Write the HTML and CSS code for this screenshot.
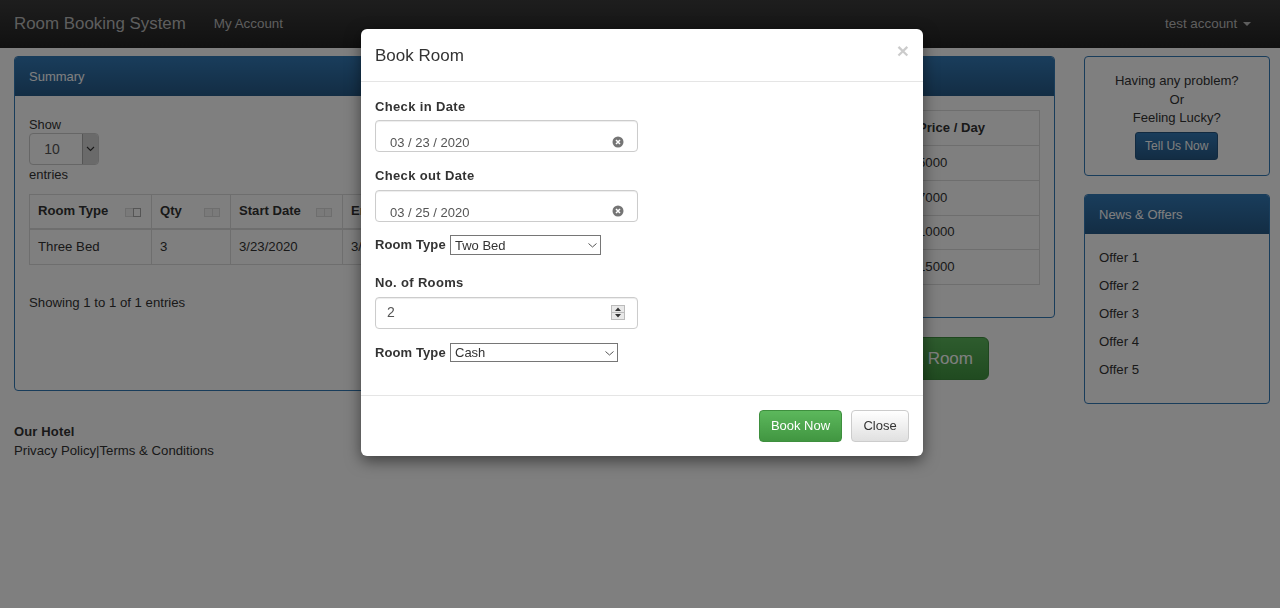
FILE: index.html
```html
<!DOCTYPE html>
<html lang="en">
<head>
<meta charset="utf-8">
<title>Room Booking System</title>
<link rel="stylesheet" href="styles.css">
</head>
<body>
<nav class="navbar">
  <a class="brand">Room Booking System</a>
  <a class="nav-link">My Account</a>
  <a class="nav-user">test account <span class="caret"></span></a>
</nav>
<div class="page">
  <main class="main">
    <div class="columns">
      <section class="panel summary">
        <div class="panel-head">Summary</div>
        <div class="panel-body">
          <div class="show-label">Show</div>
          <div class="fake-select"><span class="fs-value">10</span><span class="fs-arrow"><svg width="9" height="6" viewBox="0 0 9 6"><path d="M1 1l3.500 3.500L8 1" fill="none" stroke="#333" stroke-width="1.100"/></svg></span></div>
          <div class="entries-label">entries</div>
          <table class="grid-table">
            <thead>
              <tr>
                <th class="c1">Room Type<span class="sort"><i></i><i class="on"></i></span></th>
                <th class="c2">Qty<span class="sort"><i></i><i></i></span></th>
                <th class="c3">Start Date<span class="sort"><i></i><i></i></span></th>
                <th>End Date</th>
              </tr>
            </thead>
            <tbody>
              <tr><td>Three Bed</td><td>3</td><td>3/23/2020</td><td>3/25/2020</td></tr>
            </tbody>
          </table>
          <div class="showing">Showing 1 to 1 of 1 entries</div>
        </div>
      </section>
      <div class="rooms-col">
        <section class="panel rooms">
          <div class="panel-head">Rooms</div>
          <div class="panel-body rooms-body">
            <table class="price-table">
              <thead><tr><th>Room Type</th><th class="pc">Price / Day</th></tr></thead>
              <tbody>
                <tr><td>Single</td><td class="pc">5000</td></tr>
                <tr><td>Double</td><td class="pc">7000</td></tr>
                <tr><td>Three Bed</td><td class="pc">10000</td></tr>
                <tr><td>Suite</td><td class="pc">15000</td></tr>
              </tbody>
            </table>
          </div>
        </section>
        <div class="book-wrap"><a class="btn-lg">Book Room</a></div>
      </div>
    </div>
    <footer class="footer">
      <div class="foot-title">Our Hotel</div>
      <div>Privacy Policy|Terms &amp; Conditions</div>
    </footer>
  </main>
  <aside class="side">
    <section class="help-box">
      <div>Having any problem?</div>
      <div>Or</div>
      <div>Feeling Lucky?</div>
      <a class="btn-tell">Tell Us Now</a>
    </section>
    <section class="panel news">
      <div class="panel-head">News &amp; Offers</div>
      <ul class="offers">
        <li>Offer 1</li><li>Offer 2</li><li>Offer 3</li><li>Offer 4</li><li>Offer 5</li>
      </ul>
    </section>
  </aside>
</div>
<div class="backdrop"></div>
<div class="modal">
  <div class="modal-head">
    <h4 class="modal-title">Book Room</h4>
    <span class="close-x">×</span>
  </div>
  <div class="modal-body">
    <div class="lbl">Check in Date</div>
    <div class="control date"><span class="date-val">03 / 23 / 2020</span>
      <svg class="clear" width="12" height="12" viewBox="0 0 12 12"><circle cx="6" cy="6" r="5.500" fill="#757575"/><path d="M4 4l4 4M8 4l-4 4" stroke="#fff" stroke-width="1.500"/></svg>
    </div>
    <div class="lbl second">Check out Date</div>
    <div class="control date lower"><span class="date-val">03 / 25 / 2020</span>
      <svg class="clear" width="12" height="12" viewBox="0 0 12 12"><circle cx="6" cy="6" r="5.500" fill="#757575"/><path d="M4 4l4 4M8 4l-4 4" stroke="#fff" stroke-width="1.500"/></svg>
    </div>
    <div class="inline-row first-inline"><span class="lbl-inline">Room Type</span>
      <span class="sel-wrap"><select class="sel sel-a"><option>Two Bed</option></select><svg class="chev" width="9" height="5" viewBox="0 0 9 5"><path d="M.5.500l4 3.500 4-3.500" fill="none" stroke="#555"/></svg></span>
    </div>
    <div class="lbl third">No. of Rooms</div>
    <div class="control number"><span>2</span>
      <svg class="spin" width="14" height="15" viewBox="0 0 14 15"><rect x=".5" y=".5" width="13" height="14" fill="#e8e8e8" stroke="#bbb"/><path d="M.5 7.500h13" stroke="#bbb"/><path d="M7 2.500l3 3.500H4zM7 12.500L4 9h6z" fill="#333"/></svg>
    </div>
    <div class="inline-row second-inline"><span class="lbl-inline">Room Type</span>
      <span class="sel-wrap"><select class="sel sel-b"><option>Cash</option></select><svg class="chev" width="9" height="5" viewBox="0 0 9 5"><path d="M.5.500l4 3.500 4-3.500" fill="none" stroke="#555"/></svg></span>
    </div>
  </div>
  <div class="modal-foot">
    <a class="btn btn-green">Book Now</a>
    <a class="btn btn-light">Close</a>
  </div>
</div>
</body>
</html>
```
FILE: styles.css
```css
* { box-sizing: border-box; }
html, body { height: 100%; }
body {
  margin: 0;
  background: #fff;
  color: #333;
  font-family: "Liberation Sans", Arial, sans-serif;
  font-size: 13.200px;
  line-height: 20px;
  overflow: hidden;
}
.navbar {
  height: 48px;
  display: flex;
  align-items: center;
  padding: 0 29px 1px 14px;
  background: linear-gradient(#3c3c3c, #222);
  color: #bdbdbd;
}
.brand { font-size: 16.900px; margin-right: 28px; }
.nav-user { margin-left: auto; font-size: 13.400px; }
.nav-link { font-size: 13.400px; }
.caret {
  display: inline-block;
  margin-left: 2px;
  vertical-align: middle;
  border-top: 4px solid #bdbdbd;
  border-left: 4px solid transparent;
  border-right: 4px solid transparent;
}
.page {
  display: flex;
  padding: 8px 10px 0 14px;
  gap: 29px;
}
.main { width: 1041px; }
.columns { display: flex; gap: 21px; }
.panel {
  border: 1px solid #337ab7;
  border-radius: 4px;
  background: #fff;
}
.panel-head {
  height: 39px;
  padding: 10px 14px 0;
  background: linear-gradient(#337ab7, #265a88);
  color: #fff;
  font-size: 13px;
  border-radius: 3px 3px 0 0;
}
.summary { width: 500px; height: 335px; }
.summary .panel-body { padding: 18px 14px 0; }
.show-label { height: 19px; line-height: 22px; font-size: 12.800px; }
.fake-select {
  display: flex;
  width: 70px;
  height: 32px;
  border: 1px solid #ccc;
  border-radius: 4px;
  overflow: hidden;
}
.fs-value { flex: 1; padding-right: 8px; text-align: center; line-height: 30px; color: #555; font-size: 14px; }
.fs-arrow {
  width: 16px;
  display: flex;
  align-items: center;
  justify-content: center;
  background: #d4d4d4;
  border-left: 1px solid #aaa;
}
.entries-label { height: 20px; line-height: 19px; font-size: 13px; }
.grid-table, .price-table {
  border-collapse: collapse;
  background: #fff;
}
.grid-table { margin-top: 9px; width: 600px; table-layout: fixed; }
.grid-table th, .grid-table td, .price-table th, .price-table td {
  border: 1px solid #ddd;
  padding: 0 8px;
  text-align: left;
}
.grid-table th { height: 34px; border-bottom-width: 2px; position: relative; font-size: 13.100px; }
.grid-table td { height: 36px; padding-top: 1px; }
.c1 { width: 122px; }
.c2 { width: 79px; }
.c3 { width: 112px; }
.sort { position: absolute; right: 10px; top: 13px; display: flex; }
.sort i { width: 8.500px; height: 9px; border: 1px solid #dcdcdc; margin-left: -1px; background: #f4f4f4; }
.sort i.on { border-color: #aaa; background: #fff; }
.showing { margin-top: 28px; }
.rooms-col { width: 520px; }
.rooms { height: 262px; }
.rooms-body { padding: 14px 14px 0; }
.price-table { width: 100%; }
.price-table td { height: 34.800px; }
.price-table th { height: 35px; font-size: 13.100px; }
.pc { width: 130px; }
.book-wrap { margin-top: 19px; display: flex; justify-content: flex-end; padding-right: 66px; }
.btn-lg {
  display: block;
  width: 180px;
  height: 43px;
  line-height: 41px;
  text-align: right;
  padding-right: 15px;
  font-size: 17px;
  color: #fff;
  background: linear-gradient(#5cb85c, #419641);
  border: 1px solid #3e8f3e;
  border-radius: 6px;
}
.footer { margin-top: 31px; line-height: 19px; }
.foot-title { font-weight: 700; font-size: 13px; letter-spacing: .15px; }
.side { width: 185.500px; }
.help-box {
  height: 120px;
  padding: 15px 10px 0;
  border: 1px solid #337ab7;
  border-radius: 4px;
  text-align: center;
  line-height: 18.700px;
  font-size: 13.100px;
}
.btn-tell {
  display: block;
  width: 83px;
  height: 28px;
  margin: 4px auto 0;
  line-height: 26px;
  font-size: 12px;
  color: #fff;
  background: linear-gradient(#337ab7, #265a88);
  border: 1px solid #245580;
  border-radius: 3px;
}
.news { margin-top: 18px; height: 210px; }
.offers { list-style: none; margin: 0; padding: 10px 14px 0; }
.offers li { height: 28px; line-height: 28px; }
.backdrop { position: fixed; inset: 0; background: rgba(0, 0, 0, .5); }
.modal {
  position: absolute;
  left: 361px;
  top: 29px;
  width: 562px;
  height: 427px;
  background: #fff;
  border-radius: 6px;
  box-shadow: 0 5px 15px rgba(0, 0, 0, .5);
}
.modal-head {
  height: 53px;
  padding: 14px;
  border-bottom: 1px solid #e5e5e5;
  display: flex;
  justify-content: space-between;
}
.modal-title { margin: 0; font-size: 17px; font-weight: 400; line-height: 25px; }
.close-x { font-size: 21px; font-weight: 700; color: #000; opacity: .2; line-height: 16px; }
.modal-body { padding: 14px 14px 0; height: 313px; }
.lbl { font-weight: 700; line-height: 22px; height: 20px; font-size: 13px; letter-spacing: .35px; }
.second { margin-top: 13px; }
.third { margin-top: 17px; }
.control {
  width: 263px;
  height: 32px;
  margin-top: 4px;
  border: 1px solid #ccc;
  border-radius: 4px;
  color: #555;
  position: relative;
  box-shadow: inset 0 1px 1px rgba(0, 0, 0, .075);
}
.control.lower { margin-top: 5px; }
.control.lower .clear { top: 14px; }
.control.number { margin-top: 5px; display: flex; align-items: center; padding: 0 0 2px 11px; font-size: 14px; }
.date-val { position: absolute; left: 14px; top: 12px; font-size: 13px; }
.clear { position: absolute; right: 13px; top: 15px; }
.spin { position: absolute; right: 12px; top: 7px; }
.inline-row { display: flex; align-items: center; gap: 4px; height: 20px; }
.first-inline { margin-top: 13px; }
.second-inline { margin-top: 14px; height: 19px; }
.lbl-inline { font-weight: 700; width: 71px; white-space: nowrap; font-size: 13px; letter-spacing: .1px; }
.sel-wrap { position: relative; display: flex; }
.chev { position: absolute; right: 4px; top: 8px; pointer-events: none; }
.sel {
  appearance: none;
  height: 20px;
  padding: 0 0 0 4px;
  font-family: "Liberation Sans", Arial, sans-serif;
  font-size: 13px;
  background: #fff;
  color: #333;
  border: 1px solid #767676;
  border-radius: 0;
}
.sel-a { width: 151px; }
.sel-b { width: 168px; height: 19px; }
.modal-foot {
  height: 61px;
  padding: 14px;
  border-top: 1px solid #e5e5e5;
  display: flex;
  justify-content: flex-end;
  gap: 9px;
}
.btn {
  display: block;
  height: 32px;
  text-align: center;
  line-height: 30px;
  font-size: 13px;
  border-radius: 4px;
  border: 1px solid #ccc;
}
.btn-green { width: 83px; color: #fff; background: linear-gradient(#5cb85c, #419641); border-color: #3e8f3e; }
.btn-light { width: 58px; color: #333; background: linear-gradient(#fff, #e0e0e0); border-color: #ccc; }
```
